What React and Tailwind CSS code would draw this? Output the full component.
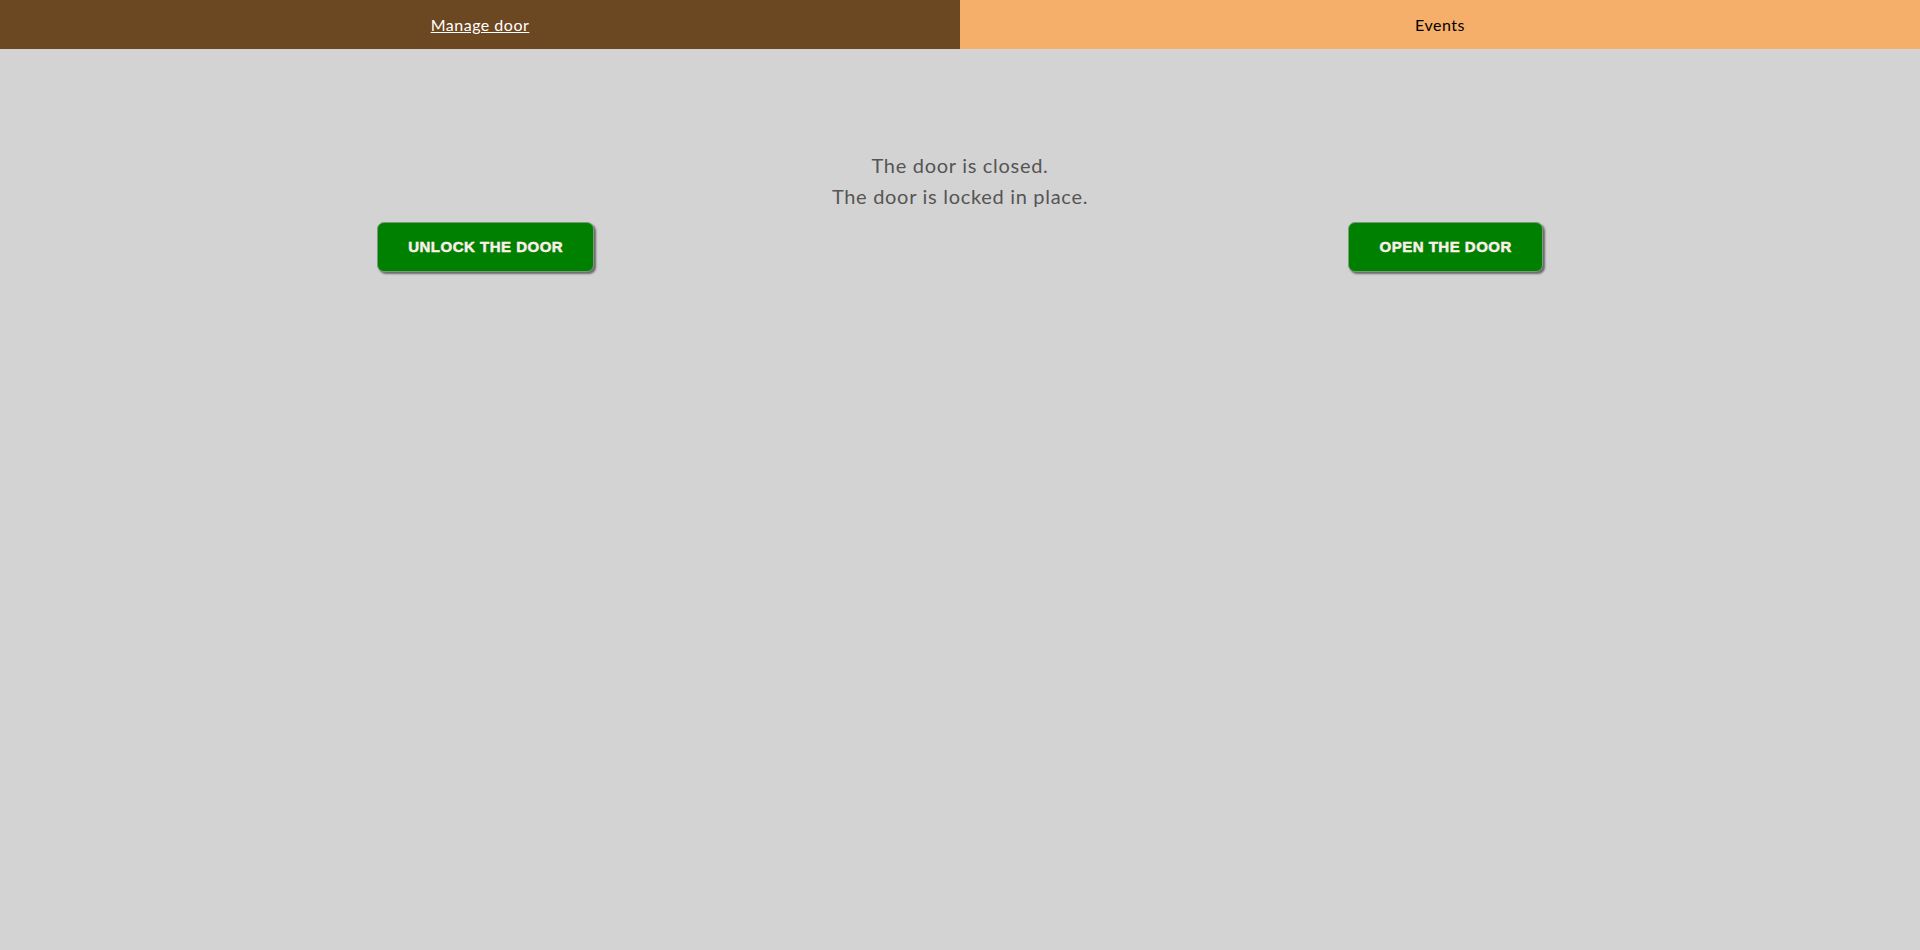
export default function App() {
  const btn =
    "h-[50px] rounded-[7px] bg-[#008000] px-[30px] text-[15px] font-bold tracking-[0.5px] text-[#fbefe9] shadow-[2px_2px_2px_#6a6a6a] border border-[#7a9a7a] [-webkit-text-stroke:0.5px_#fbefe9]";
  return (
    <div className="min-h-[950px] w-full bg-[#d3d3d3]" style={{ fontFamily: "Lato, 'Liberation Sans', sans-serif" }}>
      <nav className="flex h-[49px] w-full">
        <a className="flex flex-1 items-center justify-center bg-[#6b4722] text-[16px] tracking-[0.5px] text-white underline">Manage door</a>
        <a className="flex flex-1 items-center justify-center bg-[#f6af6a] text-[16px] tracking-[0.5px] text-black">Events</a>
      </nav>
      <div className="pt-[101px]">
        <div className="text-center text-[20px] leading-[31px] tracking-[0.7px] text-[#555555]">
          <p>The door is closed.</p>
          <p>The door is locked in place.</p>
        </div>
        <div className="mt-[10px] flex justify-around">
          <button className={btn} style={{ fontFamily: "'Liberation Sans', Arial, sans-serif" }}>
            UNLOCK THE DOOR
          </button>
          <button className={btn} style={{ fontFamily: "'Liberation Sans', Arial, sans-serif" }}>
            OPEN THE DOOR
          </button>
        </div>
      </div>
    </div>
  );
}
